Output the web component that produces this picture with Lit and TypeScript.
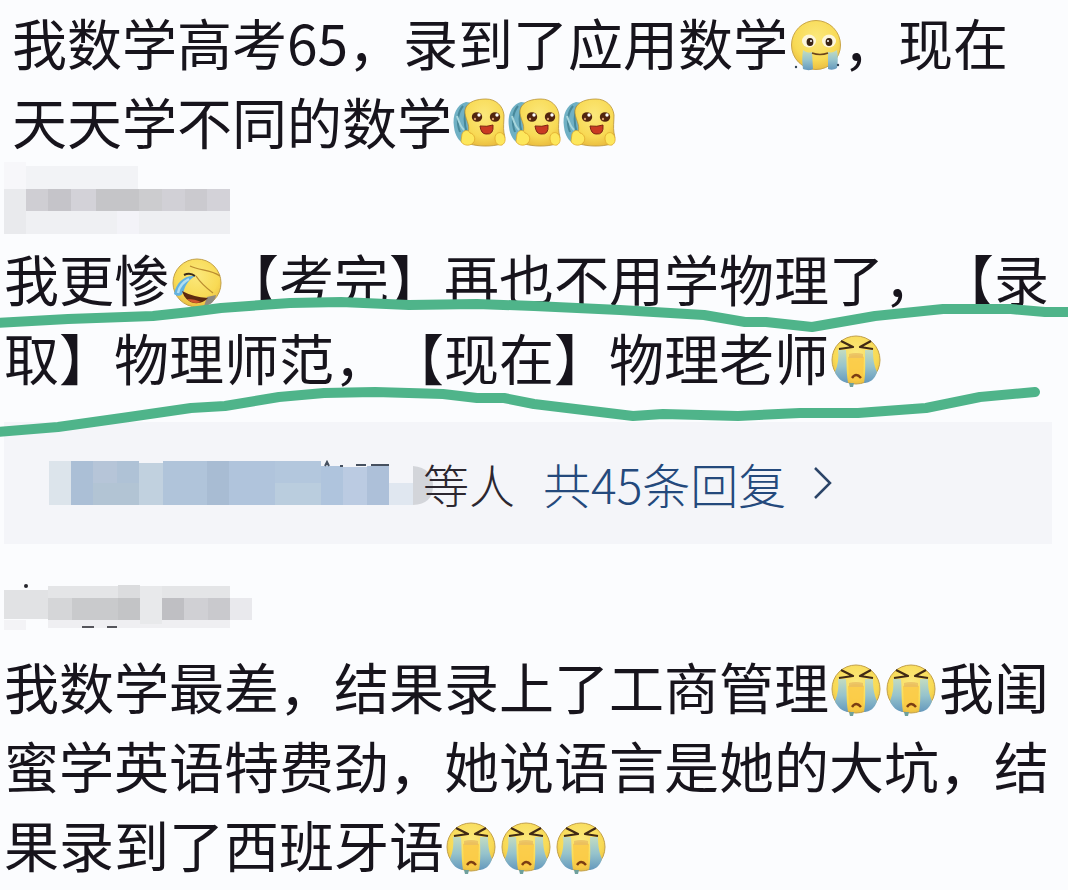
import { LitElement, html, css, svg } from "lit";
import { customElement, property } from "lit/decorators.js";

type Cell = [x: number, y: number, w: number, h: number, fill: string];

const faces = {
  teary: {
    label: "含泪微笑",
    art: svg`
      <circle cx="28" cy="26" r="24.5" fill="url(#skin)" stroke="#c9a548" stroke-width="1"/>
      <path d="M15 31c4 3 7 3 9 2l1 17c-3 2-7 1-10 0-1-6-1-13 0-19z" fill="url(#tear)"/>
      <path d="M40 33c4 1 6 0 9-2 1 6 1 13 0 18-3 2-6 2-9 1z" fill="url(#tear)"/>
      <ellipse cx="21" cy="22" rx="7" ry="6.5" fill="#fdf6dc"/>
      <ellipse cx="41" cy="22" rx="7" ry="6.5" fill="#fdf6dc"/>
      <ellipse cx="22" cy="23" rx="3.4" ry="4" fill="#3a2416"/>
      <ellipse cx="41" cy="23" rx="3.4" ry="4" fill="#3a2416"/>
      <circle cx="23" cy="22" r="1" fill="#fff"/><circle cx="40" cy="22" r="1" fill="#fff"/>
      <path d="M24 34q8 3 16 0" fill="none" stroke="#6b451c" stroke-width="1.5"/>
      <circle cx="8" cy="48" r="1.2" fill="#345"/><circle cx="50" cy="46" r="1.2" fill="#345"/>`,
  },
  moved: {
    label: "感动",
    art: svg`
      <path d="M14 4C5 6 0 17 2 29c1 9 5 14 10 17l14-8 2-32z" fill="#6fb0c4"/>
      <path d="M11 8C6 14 4 24 8 34M15 8c-3 8-3 18 0 27" fill="none" stroke="#47889a" stroke-width="2"/>
      <path d="M5 18c2 6 3 10 7 14" fill="none" stroke="#a8d7dd" stroke-width="2"/>
      <path d="M13 12C15 3 26 1 34 1c10 0 17 7 18 16 0 7-1 12 0 18 2 6 0 11-7 12-10 2-23 1-30-2-5-3-4-8 1-11 3-7-4-14-3-22z" fill="url(#skin)" stroke="#b99338" stroke-width=".8"/>
      <ellipse cx="25" cy="19" rx="5.2" ry="4.8" fill="#51240e"/>
      <ellipse cx="43" cy="19" rx="5.2" ry="4.8" fill="#51240e"/>
      <circle cx="27" cy="17" r="1.7" fill="#fff"/><circle cx="45" cy="17" r="1.7" fill="#fff"/>
      <circle cx="23" cy="21" r="1.2" fill="#d79b6a"/><circle cx="41" cy="21" r="1.2" fill="#d79b6a"/>
      <path d="M28 28q7 1 13-1 1 10-7 9-5 0-6-8z" fill="#c93a22" stroke="#7e2412" stroke-width="1"/>
      <path d="M10 36c2-5 7-4 8-1 5 1 6 7 3 10-4 4-11 2-12-2zM43 40c0-5 5-7 8-4 3 3 3 9-1 11-4 1-7-2-7-7z" fill="#fde75c" stroke="#dfa92c" stroke-width=".8"/>`,
  },
  laughing: {
    label: "笑哭",
    art: svg`
      <circle cx="28" cy="28" r="24" fill="url(#skin)" stroke="#c2a04a" stroke-width="1"/>
      <path d="M47 40c-1 6-5 10-12 11l3-9z" fill="#8f8a80"/>
      <path d="M21 11c10 5 20 3 30 10M27 21c4 6 9 11 17 17" fill="none" stroke="#b98b30" stroke-width="1.3"/>
      <path d="M26 21C15 20 7 28 5 39c5 4 9 1 10-4 2-6 5-10 11-14z" fill="#62b2e0"/>
      <path d="M20 24C14 27 10 32 9 38" stroke="#b2def2" stroke-width="2.5" fill="none"/>
      <path d="M15 20q6-3 11 1" stroke="#3b2b1a" stroke-width="2" fill="none"/>
      <path d="M13 36q11 6 26 7-5 6-14 5-9-2-12-12z" fill="#5d2a10"/>
      <path d="M18 44q8 0 14 3-8 3-14-3z" fill="#d0582e"/>`,
  },
  sobbing: {
    label: "大哭",
    art: svg`
      <circle cx="27" cy="26" r="24" fill="url(#skin)" stroke="#c2a04a" stroke-width="1"/>
      <path d="M19 23q8-4 16 0l-1 22q-7 5-14 0z" fill="#fbc843" opacity=".8"/>
      <path d="M20 20q7-2 14 0v4H20z" fill="#e9bd62" opacity=".8"/>
      <path d="M9 16h8c1 10 0 20 2 33-6-1-11-5-13-11 3-7 4-15 3-22z" fill="url(#tear)"/>
      <path d="M36 16h8c0 9 1 15 4 22-2 7-7 11-13 11 2-10 1-22 1-33z" fill="url(#tear)"/>
      <path d="M20 49h5l-1 4h-3z" fill="#6fa09c"/>
      <path d="M12 7l12 6-14 2M42 7l-11 6 13 2" fill="none" stroke="#402915" stroke-width="2.2" stroke-linejoin="round"/>
      <path d="M23 44q4-6 9 0" fill="none" stroke="#7b3d12" stroke-width="2.4"/>`,
  },
};

@customElement("chat-face")
class ChatFace extends LitElement {
  @property() kind: keyof typeof faces = "sobbing";

  static styles = css`
    :host {
      display: inline-block;
      width: 55px;
      height: 54px;
      line-height: 0;
      vertical-align: -8px;
    }
    .art {
      display: block;
      width: 55px;
      height: 54px;
    }
  `;

  render() {
    const face = faces[this.kind];
    return html`<svg class="art" viewBox="0 0 55 54" role="img" aria-label=${face.label}>
      <defs>
        <radialGradient id="skin" cx=".5" cy=".35" r=".7">
          <stop offset="0" stop-color="#fbe87c" />
          <stop offset=".65" stop-color="#f8da55" />
          <stop offset="1" stop-color="#e8b83c" />
        </radialGradient>
        <linearGradient id="tear" x1="0" y1="0" x2="0" y2="1">
          <stop offset="0" stop-color="#c3dcc0" />
          <stop offset=".5" stop-color="#96c3cc" />
          <stop offset="1" stop-color="#6599bd" />
        </linearGradient>
      </defs>
      ${face.art}
    </svg>`;
  }
}

const nameOne: Cell[] = [
  [0, 4, 22, 29, "#f7f7fa"], [22, 8, 112, 25, "#f2f3f6"],
  [0, 31, 22, 45, "#e9eaed"], [22, 53, 91, 23, "#eff0f3"],
  [113, 53, 22, 23, "#f3f3f8"], [135, 53, 91, 23, "#eeeff2"],
  [22, 31, 22, 22, "#cfced3"], [44, 31, 23, 22, "#c5c4c9"],
  [67, 31, 25, 22, "#d3d2d8"], [92, 31, 43, 22, "#c5c5c8"],
  [135, 31, 23, 22, "#cccccf"], [158, 31, 23, 22, "#d1d0d6"],
  [181, 31, 22, 22, "#cbcacf"], [203, 31, 23, 22, "#d3d2d8"],
];

const nameTwo: Cell[] = [
  [0, 38, 22, 10, "#f3f3f6"], [44, 38, 182, 8, "#efeff2"],
  [44, 4, 92, 13, "#e4e5e7"], [114, 3, 22, 14, "#dbdcde"],
  [0, 8, 44, 29, "#e1e2e4"], [136, 4, 22, 38, "#e8e9eb"],
  [158, 4, 68, 13, "#e4e5e7"], [226, 16, 22, 22, "#e9e9ed"],
  [44, 16, 24, 22, "#d5d6d8"], [68, 16, 46, 22, "#c9cacc"],
  [114, 16, 22, 22, "#c3c4c6"], [158, 16, 22, 22, "#bfbfc3"],
  [180, 16, 24, 22, "#d0d0d4"], [204, 16, 22, 22, "#c9c9cd"],
];

const nameThree: Cell[] = [
  [0, 0, 22, 44, "#dce4eb"], [22, 0, 22, 44, "#abbfd6"],
  [44, 0, 24, 22, "#b6c5d8"], [44, 22, 46, 22, "#b2c4d4"],
  [68, 0, 22, 22, "#afc2d6"], [90, 2, 24, 42, "#c1d1df"],
  [114, 0, 44, 44, "#b0c4da"], [158, 0, 22, 44, "#a8bcd3"],
  [180, 0, 46, 44, "#b0c4dc"], [226, 0, 46, 22, "#b3c7dd"],
  [226, 22, 46, 22, "#bacdde"], [272, 5, 22, 39, "#afc4dd"],
  [294, 6, 24, 38, "#bbcbe2"], [318, 5, 22, 39, "#adc0d9"],
  [340, 22, 24, 22, "#e0e7f0"],
];

const cells = (list: Cell[]) =>
  list.map(([x, y, w, h, fill]) => svg`<rect x=${x} y=${y} width=${w} height=${h} fill=${fill}/>`);

@customElement("app-root")
class AppRoot extends LitElement {
  static styles = css`
    :host {
      display: block;
      min-height: 100vh;
      background: #fbfcfe;
      color: #17141c;
      font-family: "Noto Sans CJK SC", sans-serif;
      text-spacing-trim: space-all;
    }
    .feed {
      display: flex;
      flex-direction: column;
      padding: 2px 16px 0 4px;
    }
    .text {
      margin: 0;
      font-size: 55px;
      line-height: 79px;
    }
    .first {
      padding-left: 8px;
    }
    .name {
      display: block;
      width: 250px;
      height: 78px;
    }
    .name.short {
      height: 66px;
    }
    .marked {
      position: relative;
      margin: 0 -16px 0 -4px;
      padding: 0 16px 0 4px;
    }
    .marker {
      position: absolute;
      inset: 0;
      width: 100%;
      height: 200px;
      overflow: visible;
      pointer-events: none;
    }
    .replies {
      display: flex;
      align-items: center;
      box-sizing: border-box;
      height: 122px;
      margin: 26px 0 36px;
      padding: 0 45px;
      background: #f4f5f9;
      font-size: 48px;
      line-height: 64px;
      font-weight: 300;
      white-space: nowrap;
      color: #2c2730;
    }
    .hidden-names {
      display: block;
      width: 374px;
      height: 48px;
      overflow: visible;
    }
    .others {
      font-size: 46px;
    }
    .more {
      display: flex;
      align-items: center;
      gap: 28px;
      margin-left: 28px;
      color: #24497c;
      text-decoration: none;
    }
    .chevron {
      width: 18px;
      height: 32px;
    }
  `;

  render() {
    return html`<main class="feed">
      <article>
        <p class="text first">我数学高考65，录到了应用数学<chat-face kind="teary"></chat-face>，现在天天学不同的数学<chat-face kind="moved"></chat-face><chat-face kind="moved"></chat-face><chat-face kind="moved"></chat-face></p>
      </article>
      <article>
        <svg class="name" viewBox="0 2 250 78" aria-hidden="true">${cells(nameOne)}</svg>
        <div class="marked">
          <p class="text">我更惨<chat-face kind="laughing"></chat-face>【考完】再也不用学物理了，【录取】物理师范，【现在】物理老师<chat-face kind="sobbing"></chat-face></p>
          <svg class="marker" viewBox="0 238 1068 200" preserveAspectRatio="none" aria-hidden="true">
            <g fill="none" stroke="#4fb48a" stroke-width="10" stroke-linejoin="round">
              <path d="M-4 323L68 319 153 316 190 312 221 308 290 303 341 302 409 305 477 304 534 306 620 310 704 315 745 322 766 322 812 327 875 316 943 309 1011 309 1045 312 1072 312" />
              <path stroke-linecap="round" d="M-4 432L58 427 129 417 191 408 225 406 279 397 324 393 375 392 443 394 477 398 504 398 534 404 633 416 663 414 738 416 800 413 858 413 926 408 980 397 1035 392" />
            </g>
          </svg>
        </div>
        <div class="replies">
          <svg class="hidden-names" viewBox="0 -2 374 48" aria-hidden="true">
            ${cells(nameThree)}
            <path d="M364 5q20 2 20 20t-20 19z" fill="#d3d5da" />
            <path d="M276 5l2-4 2 4M291 5h3M307 4h10M322 4h18" fill="none" stroke="#46505f" stroke-width="2" />
          </svg>
          <span class="others">等人</span>
          <a class="more" href="#replies">共45条回复<svg class="chevron" viewBox="0 0 18 32" aria-hidden="true">
            <path d="M1 1l15 15L1 31" fill="none" stroke="#2b4468" stroke-width="2.5" />
          </svg></a>
        </div>
      </article>
      <article>
        <svg class="name short" viewBox="0 -2 250 66" aria-hidden="true">
          ${cells(nameTwo)}
          <circle cx="22" cy="4" r="2" fill="#26262c" />
          <path d="M78 45h12M103 45h10" stroke="#55555b" stroke-width="2" />
        </svg>
        <p class="text">我数学最差，结果录上了工商管理<chat-face kind="sobbing"></chat-face><chat-face kind="sobbing"></chat-face>我闺蜜学英语特费劲，她说语言是她的大坑，结果录到了西班牙语<chat-face kind="sobbing"></chat-face><chat-face kind="sobbing"></chat-face><chat-face kind="sobbing"></chat-face></p>
      </article>
    </main>`;
  }
}
